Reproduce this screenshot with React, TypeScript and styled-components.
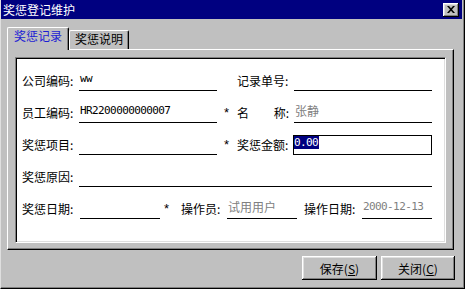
import React from 'react';
import styled, {createGlobalStyle, css} from 'styled-components';

const CJK = '"Noto Sans CJK SC", "Liberation Sans", sans-serif';
const MONO = '"DejaVu Sans Mono", "Liberation Mono", monospace';

const GlobalStyle = createGlobalStyle`
  html, body {
    margin: 0;
    padding: 0;
    background: #c0c0c0;
  }

  body {
    font-family: ${CJK};
    font-size: 12px;
  }
`;

const raised = css`
  box-shadow: inset -1px -1px #000, inset 1px 1px #fff, inset -2px -2px #808080, inset 2px 2px #dfdfdf;
`;

const monoText = css`
  font-family: ${MONO};
  font-size: 11px;
  letter-spacing: -0.6px;
`;

const Window = styled.div`
  box-sizing: border-box;
  width: 465px;
  height: 289px;
  display: flex;
  flex-direction: column;
  background: #c0c0c0;
  border-left: 1px solid #dfdfdf;
  border-right: 1px solid #000;
  border-bottom: 1px solid #000;
  box-shadow: inset -1px -1px #808080;
  padding-right: 2px;
`;

const TitleBar = styled.div`
  height: 19px;
  display: flex;
  align-items: center;
  justify-content: space-between;
  padding: 0 3px 0 2px;
  background: #000080;
  color: #fff;
  font-size: 12px;
  line-height: 19px;
`;

const CloseButton = styled.div`
  box-sizing: border-box;
  width: 16px;
  height: 14px;
  display: flex;
  align-items: center;
  justify-content: center;
  background: #c0c0c0;
  ${raised};
`;

const Body = styled.div`
  display: flex;
  flex-direction: column;
  padding: 8px 0 0 6px;
`;

const TabStrip = styled.div`
  position: relative;
  z-index: 1;
  height: 22px;
  display: flex;
  align-items: flex-end;
`;

const Tab = styled.div<{$active?: boolean}>`
  box-sizing: border-box;
  display: flex;
  justify-content: center;
  background: #c0c0c0;
  border-top: 1px solid #fff;
  border-left: 1px solid #fff;
  border-right: 1px solid #000;
  border-radius: 2px 2px 0 0;
  box-shadow: inset -1px 0 #808080;
  font-size: 12px;
  line-height: 16px;
  ${p => p.$active ? css`
    width: 62px;
    height: 23px;
    margin-bottom: -1px;
    color: #1c1cd4;
  ` : css`
    width: 60px;
    height: 19px;
    color: #000;
  `}
`;

const TabPanel = styled.div`
  box-sizing: border-box;
  width: 447px;
  padding: 7px 7px 6px 7px;
  border-top: 1px solid #fff;
  border-left: 1px solid #fff;
  border-right: 1px solid #000;
  border-bottom: 1px solid #000;
  box-shadow: inset -1px -1px #808080;
`;

const Sheet = styled.div`
  box-sizing: border-box;
  height: 186px;
  padding: 13px 0 0 6px;
  background: #fff;
  border-top: 1px solid #808080;
  border-left: 1px solid #808080;
  border-right: 1px solid #fff;
  border-bottom: 1px solid #fff;
  box-shadow: inset 1px 1px #000, inset -1px -1px #dfdfdf;
  display: flex;
  flex-direction: column;
  gap: 12px;
`;

const PairRow = styled.div`
  display: grid;
  grid-template-columns: 57px 138px 20px 57px 138px;
  height: 20px;
`;

const WideRow = styled.div`
  display: grid;
  grid-template-columns: 57px 353px;
  height: 20px;
`;

const DateRow = styled.div`
  display: grid;
  grid-template-columns: 58px 80px 21px 46px 70px 65px 70px;
  height: 20px;
`;

const Label = styled.div<{$spread?: boolean; $indent?: number}>`
  align-self: end;
  box-sizing: border-box;
  padding-bottom: 3px;
  padding-left: ${p => p.$indent ?? 0}px;
  font-size: 12px;
  line-height: 14px;
  color: #000;
  white-space: nowrap;
  ${p => p.$spread && css`
    display: flex;
    justify-content: space-between;
    width: 52px;
  `}
`;

const Star = styled.div<{$indent: number}>`
  align-self: end;
  padding: 0 0 3px ${p => p.$indent}px;
  font-family: "Liberation Sans", sans-serif;
  font-size: 13px;
  line-height: 14px;
`;

const Field = styled.div<{$gray?: boolean; $mono?: boolean}>`
  box-sizing: border-box;
  height: 20px;
  padding: 1px 0 0 1px;
  border-bottom: 1px solid #000;
  font-size: 12px;
  line-height: 14px;
  color: ${p => p.$gray ? '#808080' : '#000'};
  white-space: nowrap;
  ${p => p.$mono && monoText};
`;

const InputBox = styled.div`
  box-sizing: border-box;
  height: 20px;
  margin-left: -1px;
  border: 1px solid #000;
  background: #fff;
  line-height: 13px;
  ${monoText};
`;

const Selection = styled.span`
  display: inline-block;
  padding-right: 1px;
  background: #000080;
  color: #fff;
`;

const ButtonRow = styled.div`
  width: 448px;
  display: flex;
  justify-content: flex-end;
  gap: 4px;
  margin-top: 6px;
`;

const Button = styled.div<{$width: number}>`
  box-sizing: border-box;
  width: ${p => p.$width}px;
  height: 24px;
  display: flex;
  align-items: center;
  justify-content: center;
  background: #c0c0c0;
  font-size: 12px;
  color: #000;
  ${raised};

  & u {
    text-underline-offset: 1px;
  }
`;

const App = () => {
    return <>
        <GlobalStyle/>
        <Window>
            <TitleBar>
                <span>奖惩登记维护</span>
                <CloseButton>
                    <svg width="8" height="7" viewBox="0 0 8 7">
                        <path d="M0 0h2l2 2.2L6 0h2L5 3.5 8 7H6L4 4.8 2 7H0l3-3.5z" fill="#000"/>
                    </svg>
                </CloseButton>
            </TitleBar>
            <Body>
                <TabStrip>
                    <Tab $active>奖惩记录</Tab>
                    <Tab>奖惩说明</Tab>
                </TabStrip>
                <TabPanel>
                    <Sheet>
                        <PairRow>
                            <Label>公司编码:</Label>
                            <Field $mono>ww</Field>
                            <span/>
                            <Label>记录单号:</Label>
                            <Field/>
                        </PairRow>
                        <PairRow>
                            <Label>员工编码:</Label>
                            <Field $mono>HR2200000000007</Field>
                            <Star $indent={7}>*</Star>
                            <Label $spread><span>名</span><span>称:</span></Label>
                            <Field $gray>张静</Field>
                        </PairRow>
                        <PairRow>
                            <Label>奖惩项目:</Label>
                            <Field/>
                            <Star $indent={7}>*</Star>
                            <Label>奖惩金额:</Label>
                            <InputBox><Selection>0.00</Selection></InputBox>
                        </PairRow>
                        <WideRow>
                            <Label>奖惩原因:</Label>
                            <Field/>
                        </WideRow>
                        <DateRow>
                            <Label>奖惩日期:</Label>
                            <Field/>
                            <Star $indent={4}>*</Star>
                            <Label>操作员:</Label>
                            <Field $gray>试用用户</Field>
                            <Label $indent={7}>操作日期:</Label>
                            <Field $mono $gray>2000-12-13</Field>
                        </DateRow>
                    </Sheet>
                </TabPanel>
                <ButtonRow>
                    <Button $width={75}>保存(<u>S</u>)</Button>
                    <Button $width={74}>关闭(<u>C</u>)</Button>
                </ButtonRow>
            </Body>
        </Window>
    </>;
};

export default App;
